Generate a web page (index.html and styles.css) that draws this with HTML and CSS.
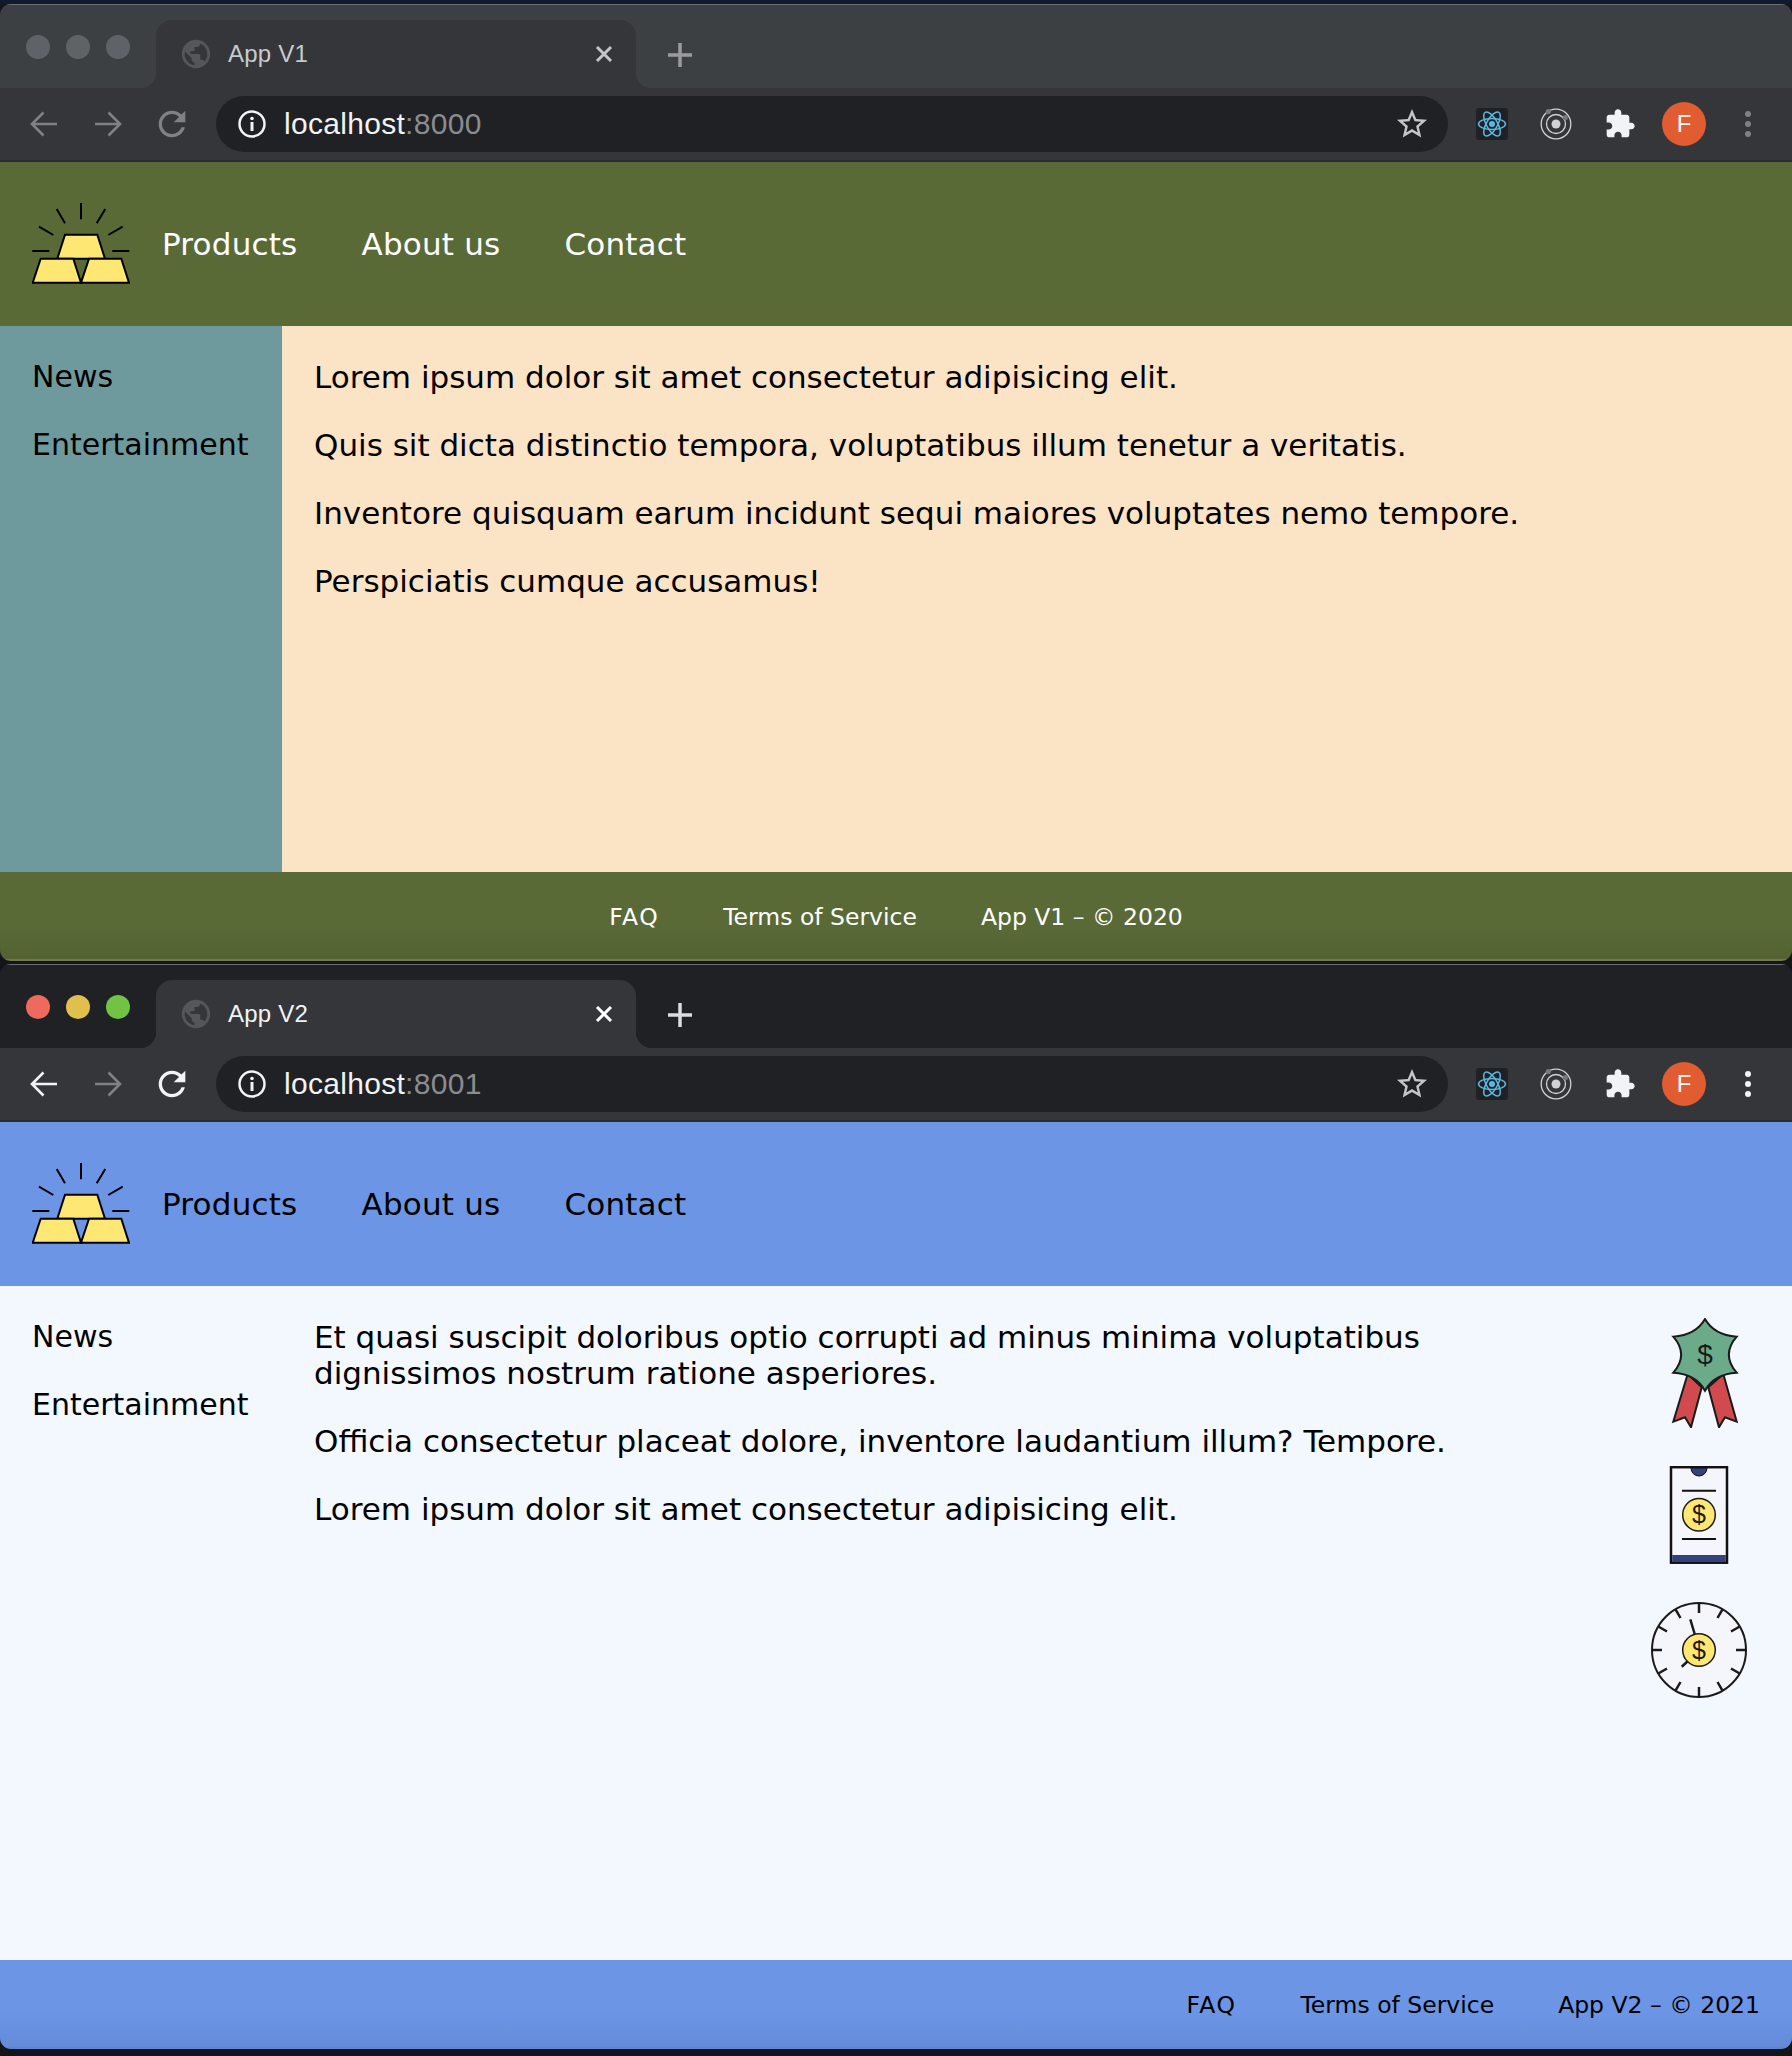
FILE: index.html
```html
<!DOCTYPE html>
<html>
  <head>
    <title>App V1 and App V2</title>
    <link rel="stylesheet" href="styles.css">
  </head>
  <body>
    <!-- shared icons -->
    <svg class="sprite">
      <symbol id="i-globe" viewBox="0 0 24 24">
        <path fill="currentColor" d="M12 2C6.48 2 2 6.48 2 12s4.48 10 10 10 10-4.48 10-10S17.52 2 12 2zm-1 17.93c-3.95-.49-7-3.85-7-7.93 0-.62.08-1.21.21-1.79L9 15v1c0 1.1.9 2 2 2v1.93zm6.9-2.54c-.26-.81-1-1.39-1.9-1.39h-1v-3c0-.55-.45-1-1-1H8v-2h2c.55 0 1-.45 1-1V7h2c1.1 0 2-.9 2-2v-.41c2.93 1.19 5 4.06 5 7.41 0 2.08-.8 3.97-2.1 5.39z"/>
      </symbol>
      <symbol id="i-close" viewBox="0 0 20 20">
        <path fill="none" stroke="currentColor" stroke-width="3" d="M3 3l14 14M17 3L3 17"/>
      </symbol>
      <symbol id="i-plus" viewBox="0 0 28 28">
        <path fill="none" stroke="currentColor" stroke-width="3.500" d="M14 2v24M2 14h24"/>
      </symbol>
      <symbol id="i-back" viewBox="0 0 32 32">
        <path fill="none" stroke="currentColor" stroke-width="2.600" d="M29 16H4M15.500 4.500L4 16l11.500 11.500"/>
      </symbol>
      <symbol id="i-forward" viewBox="0 0 32 32">
        <path fill="none" stroke="currentColor" stroke-width="2.600" d="M3 16h25M16.500 4.500L28 16 16.500 27.500"/>
      </symbol>
      <symbol id="i-reload" viewBox="0 0 24 24">
        <path fill="currentColor" d="M17.65 6.35C16.2 4.9 14.21 4 12 4c-4.42 0-7.99 3.58-7.99 8s3.57 8 7.99 8c3.73 0 6.84-2.55 7.73-6h-2.08c-.82 2.33-3.04 4-5.65 4-3.31 0-6-2.69-6-6s2.69-6 6-6c1.66 0 3.14.69 4.22 1.78L13 11h7V4l-2.35 2.35z"/>
      </symbol>
      <symbol id="i-info" viewBox="0 0 32 32">
        <circle cx="16" cy="16" r="12.500" fill="none" stroke="currentColor" stroke-width="2.500"/>
        <circle cx="16" cy="10.500" r="1.800" fill="currentColor"/>
        <rect x="14.500" y="14" width="3" height="9" fill="currentColor"/>
      </symbol>
      <symbol id="i-star" viewBox="0 0 24 24">
        <path fill="currentColor" d="M22 9.24l-7.19-.62L12 2 9.19 8.63 2 9.24l5.46 4.73L5.820 21 12 17.270 18.180 21l-1.630-7.030L22 9.240zM12 15.400l-3.760 2.270 1-4.280-3.320-2.880 4.380-.38L12 6.100l1.710 4.040 4.380.38-3.320 2.880 1 4.280L12 15.400z"/>
      </symbol>
      <symbol id="i-react" viewBox="0 0 32 32">
        <rect width="32" height="32" rx="2" fill="#202124"/>
        <g fill="none" stroke="#5bb8e2" stroke-width="1.500">
          <ellipse cx="16" cy="16" rx="13.500" ry="5.500"/>
          <ellipse cx="16" cy="16" rx="13.500" ry="5.500" transform="rotate(60 16 16)"/>
          <ellipse cx="16" cy="16" rx="13.500" ry="5.500" transform="rotate(120 16 16)"/>
        </g>
        <circle cx="16" cy="16" r="3" fill="#5bb8e2"/>
      </symbol>
      <symbol id="i-rings" viewBox="0 0 32 32">
        <g fill="none" stroke="#d0d1d2">
          <circle cx="16" cy="16" r="14.800" stroke-width="1.300"/>
          <circle cx="16" cy="16" r="9.500" stroke-width="1.300"/>
        </g>
        <circle cx="16" cy="16" r="4.500" fill="#d0d1d2"/>
        <circle cx="8.300" cy="3.500" r="2.600" fill="#77797c"/>
        <circle cx="25.300" cy="9.500" r="2.600" fill="#77797c"/>
      </symbol>
      <symbol id="i-puzzle" viewBox="0 0 24 24">
        <path fill="currentColor" d="M20.500 11H19V7c0-1.100-.9-2-2-2h-4V3.500C13 2.120 11.880 1 10.500 1S8 2.120 8 3.500V5H4c-1.100 0-1.990.9-1.990 2v3.800H3.500c1.490 0 2.700 1.210 2.700 2.700s-1.210 2.700-2.700 2.700H2V20c0 1.100.9 2 2 2h3.800v-1.500c0-1.490 1.210-2.700 2.700-2.700 1.490 0 2.700 1.210 2.700 2.700V22H17c1.100 0 2-.9 2-2v-4h1.500c1.380 0 2.500-1.120 2.500-2.500S21.880 11 20.500 11z"/>
      </symbol>
      <symbol id="i-dots" viewBox="0 0 8 32">
        <circle cx="4" cy="6" r="3" fill="currentColor"/>
        <circle cx="4" cy="16" r="3" fill="currentColor"/>
        <circle cx="4" cy="26" r="3" fill="currentColor"/>
      </symbol>
      <symbol id="i-logo" viewBox="0 0 98 82">
        <path fill="none" stroke="#000" stroke-width="2" d="M49 1v16.300M24.700 7L33 21.300M73.300 7l-8.600 14.300M7 24.700L21.300 33M90.700 24.700L76.300 33M.3 49h17M80.300 49h17"/>
        <g fill="#fee873" stroke="#000" stroke-width="2">
          <path d="M33 32.700h32.300L73 56.700H25.300z"/>
          <path d="M8.700 56.700h32.600L49 80.700H.7z"/>
          <path d="M57 56.700h32.300L97 80.700H49z"/>
        </g>
      </symbol>
      <symbol id="i-rosette" viewBox="0 0 96 110">
        <g fill="#d14b4e" stroke="#1a1a1a" stroke-width="2">
          <path d="M36.700 56L50.700 69.300 40 109.300 34 99.300 22.300 103.700z"/>
          <path d="M72.300 56L57.300 69.300 68 109.300 74 99.300 85.700 103.700z"/>
        </g>
        <path fill="#6bab8a" stroke="#1a1a1a" stroke-width="2" d="M54 1Q63 17 85.700 18.700 70 36.700 85.700 54.700 63 56 54 72.700 45 56 22.300 54.700 38 36.700 22.300 18.700 45 17 54 1z"/>
        <text x="54" y="46" class="dollar" font-size="28">$</text>
      </symbol>
      <symbol id="i-phone" viewBox="0 0 96 98">
        <rect x="20" y="1.200" width="56" height="95.500" fill="#f4f6fc" stroke="#111" stroke-width="2.500"/>
        <path fill="#34417a" stroke="#111" stroke-width="1" d="M40 2a8 8 0 0 0 16 0z"/>
        <rect x="21.200" y="89" width="53.600" height="7" fill="#34417a"/>
        <path fill="none" stroke="#111" stroke-width="2" d="M31 24.700h34M31 73h34"/>
        <circle cx="48" cy="48.700" r="16.300" fill="#fee873" stroke="#1a1a1a" stroke-width="1.500"/>
        <text x="48" y="57" class="dollar" font-size="25">$</text>
      </symbol>
      <symbol id="i-clock" viewBox="0 0 96 96">
        <circle cx="48" cy="48" r="47" fill="#f4f6fc" stroke="#1a1a1a" stroke-width="2"/>
        <path fill="none" stroke="#1a1a1a" stroke-width="2.500" d="M48 1v10M48 85v10M1 48h10M85 48h10M24.500 7.300l5 8.700M71.500 7.300l-5 8.700M24.500 88.700l5-8.700M71.500 88.700l-5-8.700M7.300 24.500l8.700 5M88.700 24.500l-8.700 5M7.300 71.500l8.700-5M88.700 71.500l-8.700-5M39.300 17.300L43.700 32M30.700 64.700l6-5.400"/>
        <circle cx="48" cy="48" r="16.300" fill="#fee873" stroke="#1a1a1a" stroke-width="1.500"/>
        <text x="48" y="56.500" class="dollar" font-size="25">$</text>
      </symbol>
    </svg>

    <!-- first window -->
    <div class="window v1">
      <div class="tabstrip">
        <div class="lights"><span class="light red"></span><span class="light yellow"></span><span class="light green"></span></div>
        <div class="tab">
          <svg class="favicon"><use href="#i-globe"/></svg>
          <span class="tab-title">App V1</span>
          <svg class="tab-close"><use href="#i-close"/></svg>
        </div>
        <svg class="new-tab"><use href="#i-plus"/></svg>
      </div>
      <div class="toolbar">
        <span class="tool tool-back"><svg class="ico-arrow"><use href="#i-back"/></svg></span>
        <span class="tool tool-forward"><svg class="ico-arrow"><use href="#i-forward"/></svg></span>
        <span class="tool tool-reload"><svg class="ico-reload"><use href="#i-reload"/></svg></span>
        <div class="omnibox">
          <svg class="ico-info"><use href="#i-info"/></svg>
          <span class="url">localhost<span class="port">:8000</span></span>
          <svg class="ico-star"><use href="#i-star"/></svg>
        </div>
        <span class="tool"><svg class="ico-ext"><use href="#i-react"/></svg></span>
        <span class="tool"><svg class="ico-ext"><use href="#i-rings"/></svg></span>
        <span class="tool tool-puzzle"><svg class="ico-ext"><use href="#i-puzzle"/></svg></span>
        <span class="tool"><span class="avatar">F</span></span>
        <span class="tool tool-dots"><svg class="ico-dots"><use href="#i-dots"/></svg></span>
      </div>
      <header class="app-header">
        <svg class="logo"><use href="#i-logo"/></svg>
        <nav class="app-nav">
          <a>Products</a>
          <a>About us</a>
          <a>Contact</a>
        </nav>
      </header>
      <div class="app-main">
        <aside class="sidebar">
          <p>News</p>
          <p>Entertainment</p>
        </aside>
        <section class="content">
          <p>Lorem ipsum dolor sit amet consectetur adipisicing elit.</p>
          <p>Quis sit dicta distinctio tempora, voluptatibus illum tenetur a veritatis.</p>
          <p>Inventore quisquam earum incidunt sequi maiores voluptates nemo tempore.</p>
          <p>Perspiciatis cumque accusamus!</p>
        </section>
      </div>
      <footer class="app-footer">
        <span>FAQ</span>
        <span>Terms of Service</span>
        <span>App V1 – © 2020</span>
      </footer>
    </div>

    <!-- second window -->
    <div class="window v2">
      <div class="tabstrip">
        <div class="lights"><span class="light red"></span><span class="light yellow"></span><span class="light green"></span></div>
        <div class="tab">
          <svg class="favicon"><use href="#i-globe"/></svg>
          <span class="tab-title">App V2</span>
          <svg class="tab-close"><use href="#i-close"/></svg>
        </div>
        <svg class="new-tab"><use href="#i-plus"/></svg>
      </div>
      <div class="toolbar">
        <span class="tool tool-back"><svg class="ico-arrow"><use href="#i-back"/></svg></span>
        <span class="tool tool-forward"><svg class="ico-arrow"><use href="#i-forward"/></svg></span>
        <span class="tool tool-reload"><svg class="ico-reload"><use href="#i-reload"/></svg></span>
        <div class="omnibox">
          <svg class="ico-info"><use href="#i-info"/></svg>
          <span class="url">localhost<span class="port">:8001</span></span>
          <svg class="ico-star"><use href="#i-star"/></svg>
        </div>
        <span class="tool"><svg class="ico-ext"><use href="#i-react"/></svg></span>
        <span class="tool"><svg class="ico-ext"><use href="#i-rings"/></svg></span>
        <span class="tool tool-puzzle"><svg class="ico-ext"><use href="#i-puzzle"/></svg></span>
        <span class="tool"><span class="avatar">F</span></span>
        <span class="tool tool-dots"><svg class="ico-dots"><use href="#i-dots"/></svg></span>
      </div>
      <header class="app-header">
        <svg class="logo"><use href="#i-logo"/></svg>
        <nav class="app-nav">
          <a>Products</a>
          <a>About us</a>
          <a>Contact</a>
        </nav>
      </header>
      <div class="app-main">
        <aside class="sidebar">
          <p>News</p>
          <p>Entertainment</p>
        </aside>
        <section class="content">
          <p>Et quasi suscipit doloribus optio corrupti ad minus minima voluptatibus dignissimos nostrum ratione asperiores.</p>
          <p>Officia consectetur placeat dolore, inventore laudantium illum? Tempore.</p>
          <p>Lorem ipsum dolor sit amet consectetur adipisicing elit.</p>
        </section>
        <aside class="badges">
          <svg class="badge badge-rosette"><use href="#i-rosette"/></svg>
          <svg class="badge badge-phone"><use href="#i-phone"/></svg>
          <svg class="badge badge-clock"><use href="#i-clock"/></svg>
        </aside>
      </div>
      <footer class="app-footer">
        <span>FAQ</span>
        <span>Terms of Service</span>
        <span>App V2 – © 2021</span>
      </footer>
    </div>
  </body>
</html>
```
FILE: styles.css
```css
html,
body {
  margin: 0;
  padding: 0;
}

body {
  height: 2056px;
  overflow: hidden;
  background: linear-gradient(#0e1a2e 4px, #141518 4px);
  font-family: "DejaVu Sans", sans-serif;
  font-size: 30px;
  line-height: 36px;
}

p {
  margin: 0;
}

.sprite {
  display: none;
}

.dollar {
  font-family: "Liberation Sans", sans-serif;
  fill: #1a1a1a;
  text-anchor: middle;
}

/* browser frame */
.window {
  display: flex;
  flex-direction: column;
  overflow: hidden;
  border-radius: 11px;
}

.v1 {
  height: 957px;
  margin-top: 4px;
  --strip: #3c4043;
  --light-red: #5f6266;
  --light-yellow: #5f6266;
  --light-green: #5f6266;
  --title: #c8cacc;
  --close: #c4c6c8;
  --plus: #9a9c9f;
  --active-tool: #7f8184;
  --dots: #7f8184;
  --bar: #5a6a37;
  --bar-dark: #546232;
  --bar-line: #6d7b4d;
  --bar-text: #fff;
  --side: #6f9a9d;
  --page: #fbe3c5;
}

.v2 {
  height: 1085px;
  margin-top: 3px;
  --strip: #202124;
  --light-red: #ee6a5f;
  --light-yellow: #e0bf4c;
  --light-green: #72c244;
  --title: #f1f3f4;
  --close: #fff;
  --plus: #dadce0;
  --active-tool: #f1f3f4;
  --dots: #f1f3f4;
  --bar: #6c95e6;
  --bar-dark: #648bd8;
  --bar-line: #5f87d4;
  --bar-text: #000;
  --side: transparent;
  --page: #f2f8fe;
}

.tabstrip {
  display: flex;
  align-items: center;
  height: 84px;
  flex-shrink: 0;
  box-sizing: border-box;
  border-top: 1px solid #6b6d70;
  background: var(--strip);
}

.lights {
  display: flex;
  align-self: flex-start;
  gap: 16px;
  width: 156px;
  box-sizing: border-box;
  padding: 30px 0 0 26px;
}

.light {
  width: 24px;
  height: 24px;
  border-radius: 50%;
}

.light.red { background: var(--light-red); }
.light.yellow { background: var(--light-yellow); }
.light.green { background: var(--light-green); }

.tab {
  position: relative;
  display: flex;
  align-items: center;
  align-self: flex-end;
  width: 480px;
  height: 68px;
  box-sizing: border-box;
  padding: 0 22px 0 23px;
  background: #35363a;
  border-radius: 16px 16px 0 0;
  color: var(--title);
  font-family: "Liberation Sans", sans-serif;
  font-size: 24px;
}

.tab::before,
.tab::after {
  content: "";
  position: absolute;
  bottom: 0;
  width: 16px;
  height: 16px;
}

.tab::before {
  left: -16px;
  background: radial-gradient(circle at 0 0, transparent 16px, #35363a 16.500px);
}

.tab::after {
  right: -16px;
  background: radial-gradient(circle at 100% 0, transparent 16px, #35363a 16.500px);
}

.favicon {
  width: 34px;
  height: 34px;
  color: #54565a;
  flex-shrink: 0;
}

.tab-title {
  flex: 1;
  margin-left: 15px;
  letter-spacing: .2px;
}

.tab-close {
  width: 20px;
  height: 20px;
  color: var(--close);
}

.new-tab {
  width: 28px;
  height: 28px;
  margin: 16px 0 0 30px;
  color: var(--plus);
}

.toolbar {
  display: flex;
  align-items: center;
  height: 74px;
  flex-shrink: 0;
  box-sizing: border-box;
  padding: 0 12px;
  background: #35363a;
  border-bottom: 2px solid #2a2b2e;
}

.tool {
  display: flex;
  align-items: center;
  justify-content: center;
  width: 64px;
  height: 56px;
  flex-shrink: 0;
  color: #7f8184;
}

.tool-back,
.tool-reload {
  color: var(--active-tool);
}

.tool-puzzle {
  color: #f1f3f4;
}

.tool-dots {
  color: var(--dots);
}

.ico-arrow {
  width: 32px;
  height: 32px;
}

.ico-reload {
  width: 40px;
  height: 40px;
}

.ico-ext {
  width: 32px;
  height: 32px;
}

.ico-dots {
  width: 8px;
  height: 32px;
}

.omnibox {
  display: flex;
  align-items: center;
  flex: 1;
  height: 56px;
  margin: 0 12px;
  padding: 0 18px 0 20px;
  background: #202124;
  border-radius: 28px;
  color: #f1f3f4;
  font-family: "Liberation Sans", sans-serif;
  font-size: 30px;
  letter-spacing: .3px;
}

.ico-info {
  width: 32px;
  height: 32px;
  flex-shrink: 0;
}

.url {
  flex: 1;
  margin-left: 16px;
}

.port {
  color: #8a8c8f;
}

.ico-star {
  width: 36px;
  height: 36px;
  color: #c4c6c8;
}

.avatar {
  display: flex;
  align-items: center;
  justify-content: center;
  width: 44px;
  height: 44px;
  border-radius: 50%;
  background: #e25c31;
  color: #fff;
  font-family: "Liberation Sans", sans-serif;
  font-size: 24px;
}

/* the app inside */
.app-header {
  display: flex;
  align-items: center;
  gap: 32px;
  height: 164px;
  flex-shrink: 0;
  padding: 0 32px;
  background: var(--bar);
  color: var(--bar-text);
}

.logo {
  width: 98px;
  height: 82px;
  margin-bottom: 3px;
}

.app-nav {
  display: flex;
  gap: 64px;
  font-size: 31px;
  letter-spacing: .2px;
}

.app-main {
  display: flex;
  flex: 1;
  background: var(--page);
  color: #000;
}

.sidebar {
  display: flex;
  flex-direction: column;
  gap: 32px;
  width: 282px;
  flex-shrink: 0;
  box-sizing: border-box;
  padding: 33px 32px;
  background: var(--side);
}

.content {
  display: flex;
  flex-direction: column;
  flex: 1;
  gap: 32px;
  padding: 33px 32px;
  font-size: 31px;
}

.v2 .content {
  padding-right: 60px;
}

.badges {
  display: flex;
  flex-direction: column;
  flex-shrink: 0;
  width: 96px;
  padding: 32px 45px 0 0;
}

.badge {
  width: 96px;
  flex-shrink: 0;
}

.badge-rosette {
  height: 110px;
}

.badge-phone {
  height: 98px;
  margin-top: 38px;
}

.badge-clock {
  height: 96px;
  margin-top: 38px;
}

.app-footer {
  display: flex;
  align-items: center;
  gap: 64px;
  height: 89px;
  flex-shrink: 0;
  box-sizing: border-box;
  padding: 3px 32px 0;
  background: linear-gradient(var(--bar) 60%, var(--bar-dark));
  border-bottom: 2px solid var(--bar-line);
  color: var(--bar-text);
  font-size: 23.500px;
}

.app-footer span:first-child {
  letter-spacing: 1.500px;
}

.v1 .app-footer {
  justify-content: center;
}

.v2 .app-footer {
  justify-content: flex-end;
}
```
